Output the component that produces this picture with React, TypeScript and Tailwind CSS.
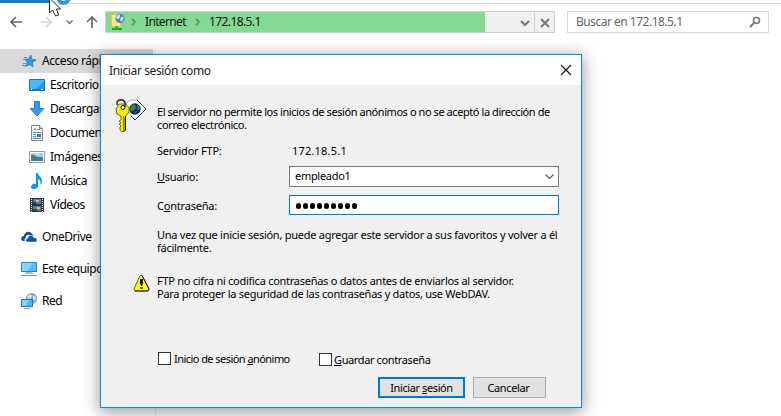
import type { ReactNode } from "react";

function StarIcon() {
  return (
    <svg width="16" height="16" viewBox="0 0 16 16">
      <path d="M10 2l.8 4.200 4.200.8-3.500 2.400.5 4.600L8.600 11.500 4.500 13.500l1.700-4L3.500 6.200 7.500 6z" fill="#2e9ae6" stroke="#2273b5" strokeWidth=".7" />
      <path d="M3 4.500h3M2 6.500h3M2 10.500h3M1 12.500h4" stroke="#5795c4" />
    </svg>
  );
}
function DesktopIcon() {
  return (
    <svg width="16" height="16" viewBox="0 0 16 16">
      <path d="M.5 2.500h15v11H.5z" fill="#189ff4" stroke="#1176bd" />
      <path d="M1 3h14v1L6 13H1z" fill="#49b8ff" />
      <path d="M1 12.500h14" stroke="#2279b5" />
      <path d="M2 12.500h1M12 12.500h2" stroke="#fff" />
    </svg>
  );
}
function DownloadIcon() {
  return (
    <svg width="16" height="16" viewBox="0 0 16 16">
      <path d="M5.500.500h5v7h4.500L8 15 1 7.500h4.500z" fill="#3997e8" stroke="#2b80cc" />
    </svg>
  );
}
function DocumentIcon() {
  return (
    <svg width="16" height="16" viewBox="0 0 16 16">
      <path d="M2.500.500h8l3 3v12h-11z" fill="#fff" stroke="#858585" />
      <path d="M10.500.500v3h3" fill="none" stroke="#858585" />
      <path d="M5 5.500l1-2 1 2M8 4.500h3M4 7.500h8M4 9.500h3M4 11.500h3M4 13.500h8" fill="none" stroke="#4497ca" />
      <path d="M8 9h4v3H8z" fill="#56717d" />
    </svg>
  );
}
function PictureIcon() {
  return (
    <svg width="16" height="16" viewBox="0 0 16 16">
      <path d="M.5 2.500h15v11H.5z" fill="#fff" stroke="#999" />
      <path d="M2 4h12v8H2z" fill="#9ccbed" />
      <path d="M2 6c3-1 4 2 7 2h5v2H2z" fill="#4f7f70" />
      <path d="M2 10h12v2H2z" fill="#3979a8" />
      <path d="M7 5h4" stroke="#e5f4fb" />
    </svg>
  );
}
function MusicIcon() {
  return (
    <svg width="16" height="16" viewBox="0 0 16 16">
      <path d="M7 0h2c0 3 4 4 4 8 0 2-1 3-2 4 1-4 0-5-2-6v7c0 2-2 3-4 3s-3-1-3-2c0-2 2-4 5-3z" fill="#079cf4" />
    </svg>
  );
}
function VideoIcon() {
  return (
    <svg width="16" height="16" viewBox="0 0 16 16">
      <path d="M1 1h14v14H1z" fill="#343434" />
      <path d="M2.500 2v13M13.500 2v13" stroke="#eee" strokeDasharray="1 1" />
      <path d="M4 2h8v5H4zM4 9h8v5H4z" fill="#447fd0" />
      <path d="M4 5h3v2H4zM4 12h4v2H4z" fill="#214e32" />
      <path d="M7 3h3v2H7zM8 10h3v2H8z" fill="#efbe34" />
      <path d="M9 5h3v1H9zM9 12h3v1H9z" fill="#c64632" />
    </svg>
  );
}
function OneDriveIcon() {
  return (
    <svg width="16" height="16" viewBox="0 0 16 16">
      <path d="M4 12H2c-3-1-2-5 1-5 0-4 6-6 8-2l2 1-3 1C7 4 4 7 5 9c-1 0-2 1-1 3z" fill="#0b4db5" />
      <path d="M6 13c-2-1-1-4 1-4 0-4 6-3 6 0 3-1 4 3 2 4z" fill="#0b4db5" stroke="#fff" strokeWidth=".5" />
    </svg>
  );
}
function ComputerIcon() {
  return (
    <svg width="16" height="16" viewBox="0 0 16 16">
      <path d="M.5 1.500h15v9H.5z" fill="#55c0ff" stroke="#3984b0" />
      <path d="M1 2h11l-6 8H1z" fill="#83d4ff" />
      <path d="M5 11.500h6M4 12.500h8" stroke="#a5b9c8" />
      <path d="M0 14.500h16" stroke="#7795ab" />
    </svg>
  );
}
function NetworkIcon() {
  return (
    <svg width="16" height="16" viewBox="0 0 16 16">
      <circle cx="10.500" cy="5.500" r="5.200" fill="#7ba9c0" stroke="#5a8fa9" strokeWidth=".6" />
      <path d="M7 2l3-1 1 3-2 2-3-1zM12 2l3 2-1 4-2-2z" fill="#c9e7ee" />
      <path d="M.5 6.500h11v7H.5z" fill="#44b6fb" stroke="#2c77a6" />
      <path d="M1 7h7l-3 6H1z" fill="#7fd1ff" />
      <path d="M3 15.500h6" stroke="#8ea5b5" />
    </svg>
  );
}
function FtpFolderIcon() {
  return (
    <svg width="14" height="18" viewBox="0 0 14 18">
      <path d="M.5 1.500h8l1 1v11h-9z" fill="#ffe38a" stroke="#e3bd52" strokeWidth=".7" />
      <circle cx="9" cy="5.500" r="4.500" fill="#4388ad" />
      <path d="M6 2.500l3-1v3L7 6.500l-2-2zM10 3.500l3 1-2 4-2-1z" fill="#c4e5f1" />
      <path d="M5.500 13v3M1 16h10" stroke="#1bab32" strokeWidth="2" />
    </svg>
  );
}
function KeyIcon() {
  return (
    <svg width="32" height="34" viewBox="0 0 32 34">
      <path d="M11 5L15 1h7l9 9-11 11-4-4v-3h-4z" fill="#fff" stroke="#aaa" />
      <path d="M22 1l9 9-11 11-4-4" fill="none" stroke="#111" strokeDasharray="1.500 .5" />
      <circle cx="20" cy="10" r="5.700" fill="#111493" />
      <path d="M16 7l4-2 1 4-4 4-2-3zM22 5l3 4-2 3-1-3zM19 13l3-1-1 3z" fill="#2c9829" />
      <path d="M1 10l3-5h7l3 4v4l-4 5v13l-3 2-2-2v-3l1-1-2-2 2-1-2-2 2-1v-4l-4-2z" fill="#f4ee00" stroke="#504f00" strokeWidth=".8" />
      <path d="M8.500 17v14" stroke="#8d8900" />
      <path d="M10.500 17v14l-2 2" fill="none" stroke="#111" />
      <path d="M2 6V3l2-2h4l2 2v4l-2 2" fill="none" stroke="#111" strokeWidth="1.300" />
      <circle cx="8" cy="8.500" r="2" fill="#eee" stroke="#111" />
    </svg>
  );
}
function WarningIcon() {
  return (
    <svg width="17" height="18" viewBox="0 0 17 18">
      <path d="M7 1.500h2L16 15l-1 2H2l-1-2z" fill="#ff0" stroke="#6d6d00" />
      <path d="M9 1.500L16 15l-1 2H2" fill="none" stroke="#181818" />
      <path d="M7 5h3v4l-1 3H8L7 9z" fill="#111" />
      <path d="M7 13h3v2H7z" fill="#555" />
    </svg>
  );
}
function Chevron() {
  return <svg width="6" height="8" viewBox="0 0 6 8"><path d="M1 1l3 3-3 3" fill="none" stroke="#777" strokeWidth="1.700" /></svg>;
}
function DownChevron() {
  return <svg width="10" height="7" viewBox="0 0 10 7"><path d="M1 1l4 4 4-4" fill="none" stroke="#777" strokeWidth="2" /></svg>;
}

function NavItem({ icon, children, className = "" }: { icon: ReactNode; children: ReactNode; className?: string }) {
  return (
    <div className={`flex h-6 items-center gap-[5px] whitespace-nowrap ${className}`}>
      {icon}
      <span className="tracking-[-0.450px]">{children}</span>
    </div>
  );
}

function Toolbar() {
  return (
    <header className="flex h-[29px] items-start">
      <div className="flex h-[22px] w-[105px] shrink-0 items-center pl-[10px]">
        <svg width="12" height="12" viewBox="0 0 12 12"><path d="M12 6H1M6 1L1 6l5 5" fill="none" stroke="#666" strokeWidth="1.600" /></svg>
        <svg className="ml-[18px]" width="12" height="12" viewBox="0 0 12 12"><path d="M0 6h11M6 1l5 5-5 5" fill="none" stroke="#d5d5d5" strokeWidth="1.600" /></svg>
        <svg className="ml-[14px]" width="7" height="5" viewBox="0 0 7 5"><path d="M.5.500l3 3 3-3" fill="none" stroke="#777" strokeWidth="1.500" /></svg>
        <svg className="ml-[13px]" width="12" height="12" viewBox="0 0 12 12"><path d="M6 12V1M1 6l5-5 5 5" fill="none" stroke="#6b6b6b" strokeWidth="1.700" /></svg>
      </div>
      <div className="flex h-[22px] w-[450px] shrink-0 border border-[#cfcfcf] bg-[#f0f0f0]">
        <div className="flex w-[379px] items-center bg-[#84d893] pl-[5px] text-[#111]">
          <FtpFolderIcon />
          <span className="ml-[6px] flex"><Chevron /></span>
          <span className="ml-[8px] w-[43px] whitespace-nowrap tracking-[-0.650px]">Internet</span>
          <span className="ml-[7px] flex"><Chevron /></span>
          <span className="ml-[8px] whitespace-nowrap tracking-[-0.600px]">172.18.5.1</span>
        </div>
        <div className="flex flex-1 items-center justify-end pr-[4px] pt-[2px]"><DownChevron /></div>
        <div className="flex w-5 items-center justify-center border-l border-[#cfcfcf] pt-px">
          <svg width="10" height="10" viewBox="0 0 10 10"><path d="M1 1l8 8M9 1L1 9" stroke="#777" strokeWidth="2" /></svg>
        </div>
      </div>
      <div className="ml-3 flex h-[22px] w-[202px] shrink-0 items-center justify-between border border-[#d5d5d5] bg-white pl-[8px] pr-[7px] text-[#666]">
        <span className="whitespace-nowrap tracking-[-0.500px]">Buscar en 172.18.5.1</span>
        <svg width="12" height="12" viewBox="0 0 12 12"><circle cx="7.500" cy="4.500" r="3" fill="none" stroke="#777" strokeWidth="1.600" /><path d="M5.500 6.500L1 11" stroke="#777" strokeWidth="2" /></svg>
      </div>
    </header>
  );
}

function LoginDialog() {
  return (
    <section className="absolute left-[100px] top-[54px] flex h-[354px] w-[482px] flex-col border border-[#1882d7] bg-[#f0f0f0] font-['Noto_Sans',sans-serif] text-[11px] leading-[13px] text-black shadow-[0_3px_15px_1px_rgba(0,0,0,0.4)]">
      <div className="flex h-[30px] shrink-0 items-center justify-between bg-white pl-[8px] pr-[9px]">
        <h1 className="whitespace-nowrap text-[12px] tracking-[-0.380px] text-[#222]">Iniciar sesión como</h1>
        <svg className="mb-px" width="12" height="12" viewBox="0 0 12 12"><path d="M1 1l10 10M11 1L1 11" stroke="#111" strokeWidth="1.100" /></svg>
      </div>
      <div className="flex pt-[14px]">
        <div className="w-[56px] shrink-0 pl-[14px]"><KeyIcon /></div>
        <div className="w-[420px] pt-[6px]">
          <p className="whitespace-nowrap tracking-[-0.430px]">El servidor no permite los inicios de sesión anónimos o no se aceptó la dirección de<br /><span className="tracking-[-0.360px]">correo electrónico.</span></p>
          <div className="mt-[13px] flex"><span className="w-[135px] whitespace-nowrap tracking-[-0.220px]">Servidor FTP:</span><span className="tracking-[0.200px]">172.18.5.1</span></div>
          <div className="mt-[8px] flex h-[22px] items-center">
            <span className="w-[132px] tracking-[-0.300px]"><u>U</u>suario:</span>
            <div className="flex h-[21px] w-[270px] items-center justify-between border border-[#7a7a7a] bg-white pl-[5px] pr-[4px]"><span className="pb-px tracking-[-0.300px]">empleado1</span><svg className="mt-px" width="9" height="6" viewBox="0 0 9 6"><path d="M.5.500l4 4 4-4" fill="none" stroke="#555" strokeWidth="1.100" /></svg></div>
          </div>
          <div className="mt-[8px] flex h-5 items-center">
            <span className="w-[132px] tracking-[-0.200px]">C<u>o</u>ntraseña:</span>
            <div className="flex h-5 w-[270px] items-center gap-[2px] border border-[#0078d7] bg-white pl-[6px] pt-px">{Array.from({ length: 9 }, (_, i) => <i key={i} className="h-[6px] w-[5px] rounded-full bg-black" />)}</div>
          </div>
          <p className="mt-[13px] whitespace-nowrap tracking-[-0.260px]">Una vez que inicie sesión, puede agregar este servidor a sus favoritos y volver a él<br />fácilmente.</p>
        </div>
      </div>
      <div className="mt-[20px] flex pl-[32px]">
        <WarningIcon />
        <p className="ml-[7px] whitespace-nowrap tracking-[-0.270px]">FTP no cifra ni codifica contraseñas o datos antes de enviarlos al servidor.<br />Para proteger la seguridad de las contraseñas y datos, use WebDAV.</p>
      </div>
      <div className="mt-auto flex h-[14px] pl-[57px]">
        <div className="flex w-[161px] gap-[3px]"><i className="size-[13px] border border-[#333] bg-white" /><span className="whitespace-nowrap tracking-[-0.550px]">Inicio de sesión <u>a</u>nónimo</span></div>
        <div className="flex gap-[2px] pt-px"><i className="size-[13px] border border-[#333] bg-white" /><span className="whitespace-nowrap tracking-[-0.380px]"><u>G</u>uardar contraseña</span></div>
      </div>
      <div className="mb-[9px] mt-[11px] flex justify-end gap-2 pr-[35px]">
        <button className="h-[21px] w-[87px] whitespace-nowrap border-2 border-[#0078d7] bg-[#e1e1e1] tracking-[-0.400px]">Iniciar <u>s</u>esión</button>
        <button className="h-[21px] w-[73px] whitespace-nowrap border border-[#adadad] bg-[#e1e1e1] pr-[2px] tracking-[-0.350px]">Cancelar</button>
      </div>
    </section>
  );
}

export default function App() {
  return (
    <main className="relative h-[416px] w-[781px] overflow-hidden bg-white font-['Noto_Sans',sans-serif] text-[12px] leading-4 text-black">
      <div className="flex h-[11px] items-start"><div className="h-[3px] w-[50px] bg-[#1979ca]" /><div className="h-1 flex-1 border-b border-[#ddd]" /></div>
      <Toolbar />
      <div className="flex h-[376px] pt-[9px]">
        <aside className="w-[156px] border-r border-[#f0f0f0]">
          <div className="w-[153px] bg-[#d9d9d9]"><NavItem icon={<StarIcon />} className="pl-[21px]">Acceso rápido</NavItem></div>
          <div className="pl-[29px]">
            <NavItem icon={<DesktopIcon />}>Escritorio</NavItem>
            <NavItem icon={<DownloadIcon />}>Descargas</NavItem>
            <NavItem icon={<DocumentIcon />}>Documentos</NavItem>
            <NavItem icon={<PictureIcon />}>Imágenes</NavItem>
            <NavItem icon={<MusicIcon />}>Música</NavItem>
            <NavItem icon={<VideoIcon />}>Vídeos</NavItem>
          </div>
          <div className="flex flex-col gap-2 pl-[21px] pt-2">
            <NavItem icon={<OneDriveIcon />}>OneDrive</NavItem>
            <NavItem icon={<ComputerIcon />}>Este equipo</NavItem>
            <NavItem icon={<NetworkIcon />}>Red</NavItem>
          </div>
        </aside>
      </div>
      <LoginDialog />
      <svg className="absolute left-[48px] top-0" width="28" height="17" viewBox="0 0 28 17">
        <circle cx="15.500" cy="-2" r="5" fill="none" stroke="#2d91ed" strokeWidth="4" />
        <path d="M1.500-2v15l3-3 3 6 3-1-2-6h4z" fill="#fff" stroke="#222" />
      </svg>
    </main>
  );
}
